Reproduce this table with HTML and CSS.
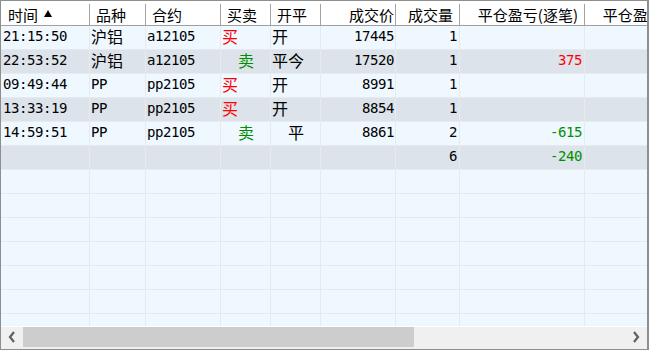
FILE: index.html
```html
<!DOCTYPE html>
<html>
<head>
<meta charset="utf-8">
<link rel="stylesheet" href="styles.css">
</head>
<body>
<div class="win">
  <div class="view">
    <div class="table">
      <div class="hdr">
        <div class="h w1 l">时间<svg class="sort" width="8" height="7" viewBox="0 0 8 7"><polygon points="4,0 8,7 0,7" fill="#000"/></svg></div>
        <div class="h w2 l">品种</div>
        <div class="h w3 l">合约</div>
        <div class="h w4 l">买卖</div>
        <div class="h w5 l">开平</div>
        <div class="h w6 r">成交价</div>
        <div class="h w7 r">成交量</div>
        <div class="h w8 r">平仓盈亏(逐笔)</div>
        <div class="h w9 r">平仓盈亏(逐日)</div>
      </div>

      <div class="row odd">
        <div class="d w1 m p2">21:15:50</div>
        <div class="d w2 c">沪铝</div>
        <div class="d w3 m">a12105</div>
        <div class="d w4 c buy">买</div>
        <div class="d w5 c">开</div>
        <div class="d w6 m r">17445</div>
        <div class="d w7 m r">1</div>
        <div class="d w8 m r"></div>
        <div class="d w9 m r"></div>
      </div>
      <div class="row even">
        <div class="d w1 m p2">22:53:52</div>
        <div class="d w2 c">沪铝</div>
        <div class="d w3 m">a12105</div>
        <div class="d w4 c sell ind">卖</div>
        <div class="d w5 c">平今</div>
        <div class="d w6 m r">17520</div>
        <div class="d w7 m r">1</div>
        <div class="d w8 m r up">375</div>
        <div class="d w9 m r"></div>
      </div>
      <div class="row odd">
        <div class="d w1 m p2">09:49:44</div>
        <div class="d w2 m">PP</div>
        <div class="d w3 m">pp2105</div>
        <div class="d w4 c buy">买</div>
        <div class="d w5 c">开</div>
        <div class="d w6 m r">8991</div>
        <div class="d w7 m r">1</div>
        <div class="d w8 m r"></div>
        <div class="d w9 m r"></div>
      </div>
      <div class="row even">
        <div class="d w1 m p2">13:33:19</div>
        <div class="d w2 m">PP</div>
        <div class="d w3 m">pp2105</div>
        <div class="d w4 c buy">买</div>
        <div class="d w5 c">开</div>
        <div class="d w6 m r">8854</div>
        <div class="d w7 m r">1</div>
        <div class="d w8 m r"></div>
        <div class="d w9 m r"></div>
      </div>
      <div class="row odd">
        <div class="d w1 m p2">14:59:51</div>
        <div class="d w2 m">PP</div>
        <div class="d w3 m">pp2105</div>
        <div class="d w4 c sell ind">卖</div>
        <div class="d w5 c ind">平</div>
        <div class="d w6 m r">8861</div>
        <div class="d w7 m r">2</div>
        <div class="d w8 m r down">-615</div>
        <div class="d w9 m r"></div>
      </div>
      <div class="row even">
        <div class="d w1 m p2"></div>
        <div class="d w2 m"></div>
        <div class="d w3 m"></div>
        <div class="d w4 c"></div>
        <div class="d w5 c"></div>
        <div class="d w6 m r"></div>
        <div class="d w7 m r">6</div>
        <div class="d w8 m r down">-240</div>
        <div class="d w9 m r"></div>
      </div>

      <div class="row odd"><div class="d w1"></div><div class="d w2"></div><div class="d w3"></div><div class="d w4"></div><div class="d w5"></div><div class="d w6"></div><div class="d w7"></div><div class="d w8"></div><div class="d w9"></div></div>
      <div class="row odd"><div class="d w1"></div><div class="d w2"></div><div class="d w3"></div><div class="d w4"></div><div class="d w5"></div><div class="d w6"></div><div class="d w7"></div><div class="d w8"></div><div class="d w9"></div></div>
      <div class="row odd"><div class="d w1"></div><div class="d w2"></div><div class="d w3"></div><div class="d w4"></div><div class="d w5"></div><div class="d w6"></div><div class="d w7"></div><div class="d w8"></div><div class="d w9"></div></div>
      <div class="row odd"><div class="d w1"></div><div class="d w2"></div><div class="d w3"></div><div class="d w4"></div><div class="d w5"></div><div class="d w6"></div><div class="d w7"></div><div class="d w8"></div><div class="d w9"></div></div>
      <div class="row odd"><div class="d w1"></div><div class="d w2"></div><div class="d w3"></div><div class="d w4"></div><div class="d w5"></div><div class="d w6"></div><div class="d w7"></div><div class="d w8"></div><div class="d w9"></div></div>
      <div class="row odd"><div class="d w1"></div><div class="d w2"></div><div class="d w3"></div><div class="d w4"></div><div class="d w5"></div><div class="d w6"></div><div class="d w7"></div><div class="d w8"></div><div class="d w9"></div></div>
      <div class="row odd"><div class="d w1"></div><div class="d w2"></div><div class="d w3"></div><div class="d w4"></div><div class="d w5"></div><div class="d w6"></div><div class="d w7"></div><div class="d w8"></div><div class="d w9"></div></div>
    </div>
  </div>
  <div class="hscroll">
    <div class="sbtn">
      <svg width="8" height="12" viewBox="0 0 8 12"><polyline points="6,1 2,6 6,11" fill="none" stroke="#606060" stroke-width="2.2"/></svg>
    </div>
    <div class="track"><div class="thumb"></div></div>
    <div class="sbtn">
      <svg width="8" height="12" viewBox="0 0 8 12"><polyline points="2,1 6,6 2,11" fill="none" stroke="#606060" stroke-width="2.2"/></svg>
    </div>
  </div>
</div>
</body>
</html>
```

FILE: styles.css
```css
html, body {
  margin: 0;
  padding: 0;
  background: #ffffff;
}

.win {
  width: 649px;
  height: 350px;
  box-sizing: border-box;
  border: 1px solid #8e8e8e;
  border-right-width: 2px;
  background: #eff7ff;
  display: flex;
  flex-direction: column;
}

.view {
  height: 325px;
  overflow: hidden;
  background: #eff7ff;
}

.table {
  width: 760px;
}

.hdr {
  display: flex;
  height: 25px;
  box-sizing: border-box;
  border-bottom: 1px solid #a0a0a0;
  background: #ffffff;
}

.h {
  flex: none;
  box-sizing: border-box;
  margin-top: 3px;
  height: 21px;
  border-right: 1px solid #a3a3a3;
  font-family: "Noto Sans CJK SC", "Liberation Sans", sans-serif;
  font-size: 15px;
  line-height: 21px;
  color: #000;
  white-space: nowrap;
  display: flex;
  align-items: center;
}

.h.l {
  padding-left: 6px;
  justify-content: flex-start;
}

.h.r {
  padding-right: 6px;
  justify-content: flex-end;
}

.h.w1 {
  padding-left: 7px;
}

.sort {
  margin-left: 6px;
  margin-top: -2px;
}

.row {
  display: flex;
  height: 24px;
}

.odd {
  background: #eff7ff;
}

.even {
  background: #dde3ea;
}

.d {
  flex: none;
  box-sizing: border-box;
  height: 24px;
  border-right: 1px solid #e6eaee;
  border-bottom: 1px solid #e6eaee;
  line-height: 21px;
  color: #000;
  white-space: nowrap;
  padding-left: 1px;
}

.even .d {
  border-color: #e9ecef;
}

.m {
  font-family: "DejaVu Sans Mono", "Noto Sans CJK SC", monospace;
  font-size: 14px;
  letter-spacing: -0.43px;
}

.c {
  font-family: "Noto Sans CJK SC", sans-serif;
  font-size: 16px;
}

.r {
  text-align: right;
  padding-left: 0;
  padding-right: 2px;
}

.w6.r {
  padding-right: 1px;
}

.p2 {
  padding-left: 2px;
}

.ind {
  padding-left: 17px;
}

.buy, .up {
  color: #ff0000;
}

.sell, .down {
  color: #008f00;
}

.w1 { width: 89px; }
.w2 { width: 56px; }
.w3 { width: 75px; }
.w4 { width: 50px; }
.w5 { width: 50px; }
.w6 { width: 75px; }
.w7 { width: 64px; }
.w8 { width: 125px; }
.w9 { width: 125px; }

.hscroll {
  height: 22px;
  border-top: 1px solid #ffffff;
  background: #f0f0f0;
  display: flex;
}

.sbtn {
  width: 22px;
  height: 20px;
  flex: none;
  display: flex;
  align-items: center;
  justify-content: center;
}

.track {
  flex: 1;
}

.thumb {
  width: 391px;
  height: 20px;
  background: #cdcdcd;
}
```
